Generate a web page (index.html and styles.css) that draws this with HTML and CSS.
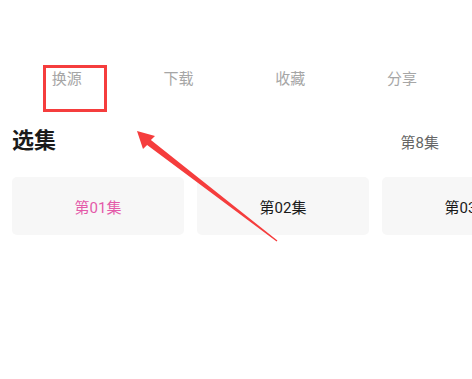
FILE: index.html
```html
<!DOCTYPE html>
<html lang="zh">
<head>
<meta charset="utf-8">
<link rel="stylesheet" href="styles.css">
</head>
<body>
<div class="page">
  <nav class="tabs">
    <span class="tab">换源</span>
    <span class="tab">下载</span>
    <span class="tab">收藏</span>
    <span class="tab">分享</span>
  </nav>
  <div class="title-row">
    <h2 class="title">选集</h2>
    <span class="count">第8集</span>
  </div>
  <div class="episodes">
    <div class="ep active">第01集</div>
    <div class="ep">第02集</div>
    <div class="ep">第03集</div>
  </div>
  <div class="highlight"></div>
  <svg class="arrow" width="472" height="379" viewBox="0 0 472 379">
    <polygon fill="#f53d3d" points="137,131 155,136 150.9,140.1 277.4,240.6 276.6,241.4 147.1,144.9 143,149"/>
  </svg>
</div>
</body>
</html>
```
FILE: styles.css
```css
html, body {
  margin: 0;
  padding: 0;
  background: #ffffff;
}
body {
  font-family: Roboto, "Noto Sans CJK SC", sans-serif;
  width: 472px;
  height: 379px;
  overflow: hidden;
}
.page {
  position: relative;
  width: 472px;
  height: 379px;
  overflow: hidden;
}
.tabs {
  display: grid;
  grid-template-columns: repeat(4, 1fr);
  padding: 0 14px 0 11px;
  margin-top: 64px;
}
.tab {
  text-align: center;
  font-size: 15px;
  line-height: 30px;
  color: #a6a6a6;
}
.title-row {
  display: flex;
  justify-content: space-between;
  align-items: center;
  padding: 0 33px 0 12px;
  margin-top: 32px;
  height: 30px;
}
.title {
  margin: 0;
  font-size: 22px;
  font-weight: bold;
  color: #1a1a1a;
  line-height: 30px;
}
.count {
  font-size: 15px;
  color: #666666;
}
.episodes {
  display: flex;
  gap: 13px;
  padding-left: 12px;
  margin-top: 21px;
}
.ep {
  flex: 0 0 172px;
  height: 58px;
  border-radius: 5px;
  background: #f7f7f7;
  display: flex;
  align-items: center;
  justify-content: center;
  font-size: 15px;
  color: #1a1a1a;
}
.ep.active {
  color: #e45aa9;
}
.highlight {
  position: absolute;
  left: 43px;
  top: 65px;
  width: 58px;
  height: 41px;
  border: 3px solid #f53d3d;
}
.arrow {
  position: absolute;
  left: 0;
  top: 0;
}
```
